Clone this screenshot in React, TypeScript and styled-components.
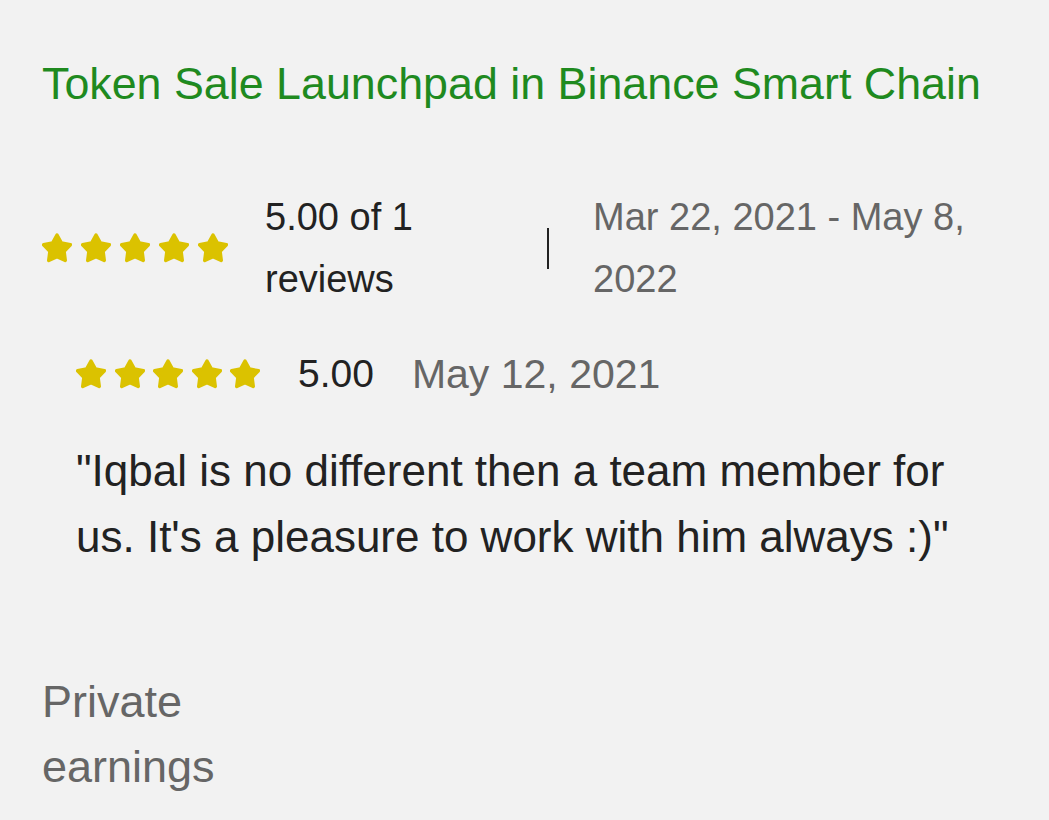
import React from 'react'
import styled, { createGlobalStyle } from 'styled-components'

const GlobalStyle = createGlobalStyle`
  html, body {
    margin: 0;
    padding: 0;
    background-color: #f2f2f2;
  }
  body {
    font-family: 'Liberation Sans', Arial, sans-serif;
  }
`

// chubby rounded five-point star
const STAR_POINTS =
  '12,2.3 15.3,8.3 21.99,9.56 17.3,14.5 18.17,21.29 12,18.4 5.83,21.29 6.7,14.5 2.01,9.56 8.7,8.3'

function Star({ size }: { size: number }) {
  return (
    <svg width={size} height={size} viewBox="0.8 0.8 22.4 22.4">
      <polygon
        points={STAR_POINTS}
        fill="#dbc200"
        stroke="#dbc200"
        strokeWidth={2.6}
        strokeLinejoin="round"
      />
    </svg>
  )
}

function Stars({ size, gap }: { size: number; gap: number }) {
  return (
    <StarRow $gap={gap}>
      {[0, 1, 2, 3, 4].map((i) => (
        <Star key={i} size={size} />
      ))}
    </StarRow>
  )
}

export default function App() {
  return (
    <>
      <GlobalStyle />
      <Page>
        <Title>Token Sale Launchpad in Binance Smart Chain</Title>

        <SummaryRow>
          <Stars size={30} gap={9} />
          <RatingText>5.00 of 1 reviews</RatingText>
          <Divider />
          <Period>Mar 22, 2021 - May 8, 2022</Period>
        </SummaryRow>

        <Review>
          <ReviewHead>
            <Stars size={30} gap={8.5} />
            <Score>5.00</Score>
            <ReviewDate>May 12, 2021</ReviewDate>
          </ReviewHead>
          <Quote>
            "Iqbal is no different then a team member for us. It's a pleasure
            to work with him always :)"
          </Quote>
        </Review>

        <Earnings>Private earnings</Earnings>
      </Page>
    </>
  )
}

const Page = styled.div`
  padding: 57px 42px 0 42px;
  box-sizing: border-box;
  width: 1049px;
  min-height: 820px;
`

const Title = styled.h2`
  margin: 0;
  font-size: 44.8px;
  line-height: 52px;
  font-weight: 400;
  color: #1f8a1f;
  white-space: nowrap;
`

const StarRow = styled.div<{ $gap: number }>`
  display: flex;
  align-items: center;
  gap: ${(p) => p.$gap}px;
  flex-shrink: 0;
`

const SummaryRow = styled.div`
  display: flex;
  align-items: center;
  margin-top: 77px;
`

const RatingText = styled.div`
  width: 240px;
  margin-left: 37px;
  font-size: 38px;
  line-height: 62px;
  color: #222222;
`

const Divider = styled.div`
  width: 2px;
  height: 41px;
  margin-left: 42px;
  background-color: #222222;
  flex-shrink: 0;
`

const Period = styled.div`
  flex: 1;
  margin-left: 44px;
  font-size: 38px;
  line-height: 62px;
  color: #666666;
`

const Review = styled.div`
  padding-left: 34px;
  margin-top: 40px;
`

const ReviewHead = styled.div`
  display: flex;
  align-items: center;
  height: 48px;
`

const Score = styled.span`
  margin-left: 38px;
  font-size: 39px;
  line-height: 48px;
  color: #222222;
`

const ReviewDate = styled.span`
  margin-left: 38px;
  font-size: 41px;
  line-height: 48px;
  color: #666666;
`

const Quote = styled.p`
  margin: 40px 0 0 0;
  font-size: 44px;
  line-height: 66px;
  color: #222222;
`

const Earnings = styled.div`
  width: 240px;
  margin-top: 99px;
  font-size: 45px;
  line-height: 65px;
  color: #666666;
`
